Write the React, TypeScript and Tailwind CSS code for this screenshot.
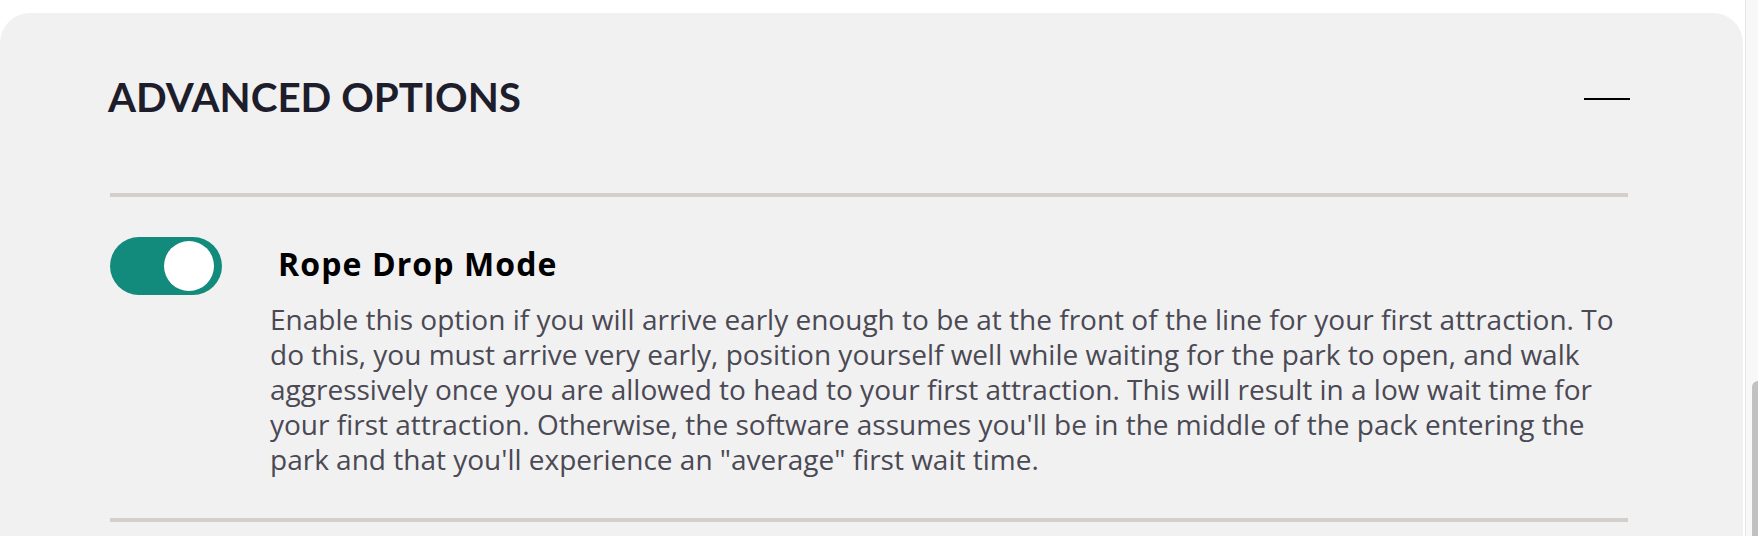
import React from "react";

export default function App() {
    const on = true;
    return (
        <div className="flex h-[536px] w-full overflow-hidden bg-white">
            <div className="flex-1 pt-[13px]">
                <div className="h-full w-[1743px] rounded-t-[30px] bg-[#f1f1f1] pl-[108px] pr-[113px] pt-[59px]">
                    <div className="flex items-center justify-between">
                        <h2 className="font-['Lato',sans-serif] text-[40.4px] font-bold leading-[50px] text-[#1e1d2b]">
                            ADVANCED OPTIONS
                        </h2>
                        <span className="mt-[4px] block h-[2px] w-[46px] bg-black" />
                    </div>
                    <div className="mx-[2px] mt-[71px] h-[4px] bg-[#d2cfcc]" />
                    <div className="flex items-start pl-[2px] pt-[40px]">
                        <button
                            className={
                                on
                                    ? "flex h-[58px] w-[112px] shrink-0 items-center justify-end rounded-full bg-[#128a7c] pr-[8px]"
                                    : "flex h-[58px] w-[112px] shrink-0 items-center justify-start rounded-full bg-[#cfcfcf] pl-[8px]"
                            }
                        >
                            <span className="block h-[50px] w-[50px] rounded-full bg-white" />
                        </button>
                        <div className="ml-[48px] flex-1 pt-[7px]">
                            <h3 className="pl-[8px] font-['Open_Sans',sans-serif] text-[32px] font-bold leading-[40px] tracking-[1.1px] text-black">
                                Rope Drop Mode
                            </h3>
                            <p className="mt-[18px] font-['Open_Sans',sans-serif] text-[28px] leading-[35px] text-[#4a4954]">
                                Enable this option if you will arrive early enough to be at the front of the line for your first attraction. To do this, you must arrive very early, position yourself well while waiting for the park to open, and walk aggressively once you are allowed to head to your first attraction. This will result in a low wait time for your first attraction. Otherwise, the software assumes you'll be in the middle of the pack entering the park and that you'll experience an "average" first wait time.
                            </p>
                        </div>
                    </div>
                    <div className="mx-[2px] mt-[41px] h-[4px] bg-[#d2cfcc]" />
                </div>
            </div>
            <div className="flex w-[13px] flex-col border-l border-[#e4e4e4] bg-[#f8f8f8] pl-[6px] pt-[381px]">
                <div className="flex-1 rounded-tl-[6px] bg-[#c1c1c1]" />
            </div>
        </div>
    );
}
